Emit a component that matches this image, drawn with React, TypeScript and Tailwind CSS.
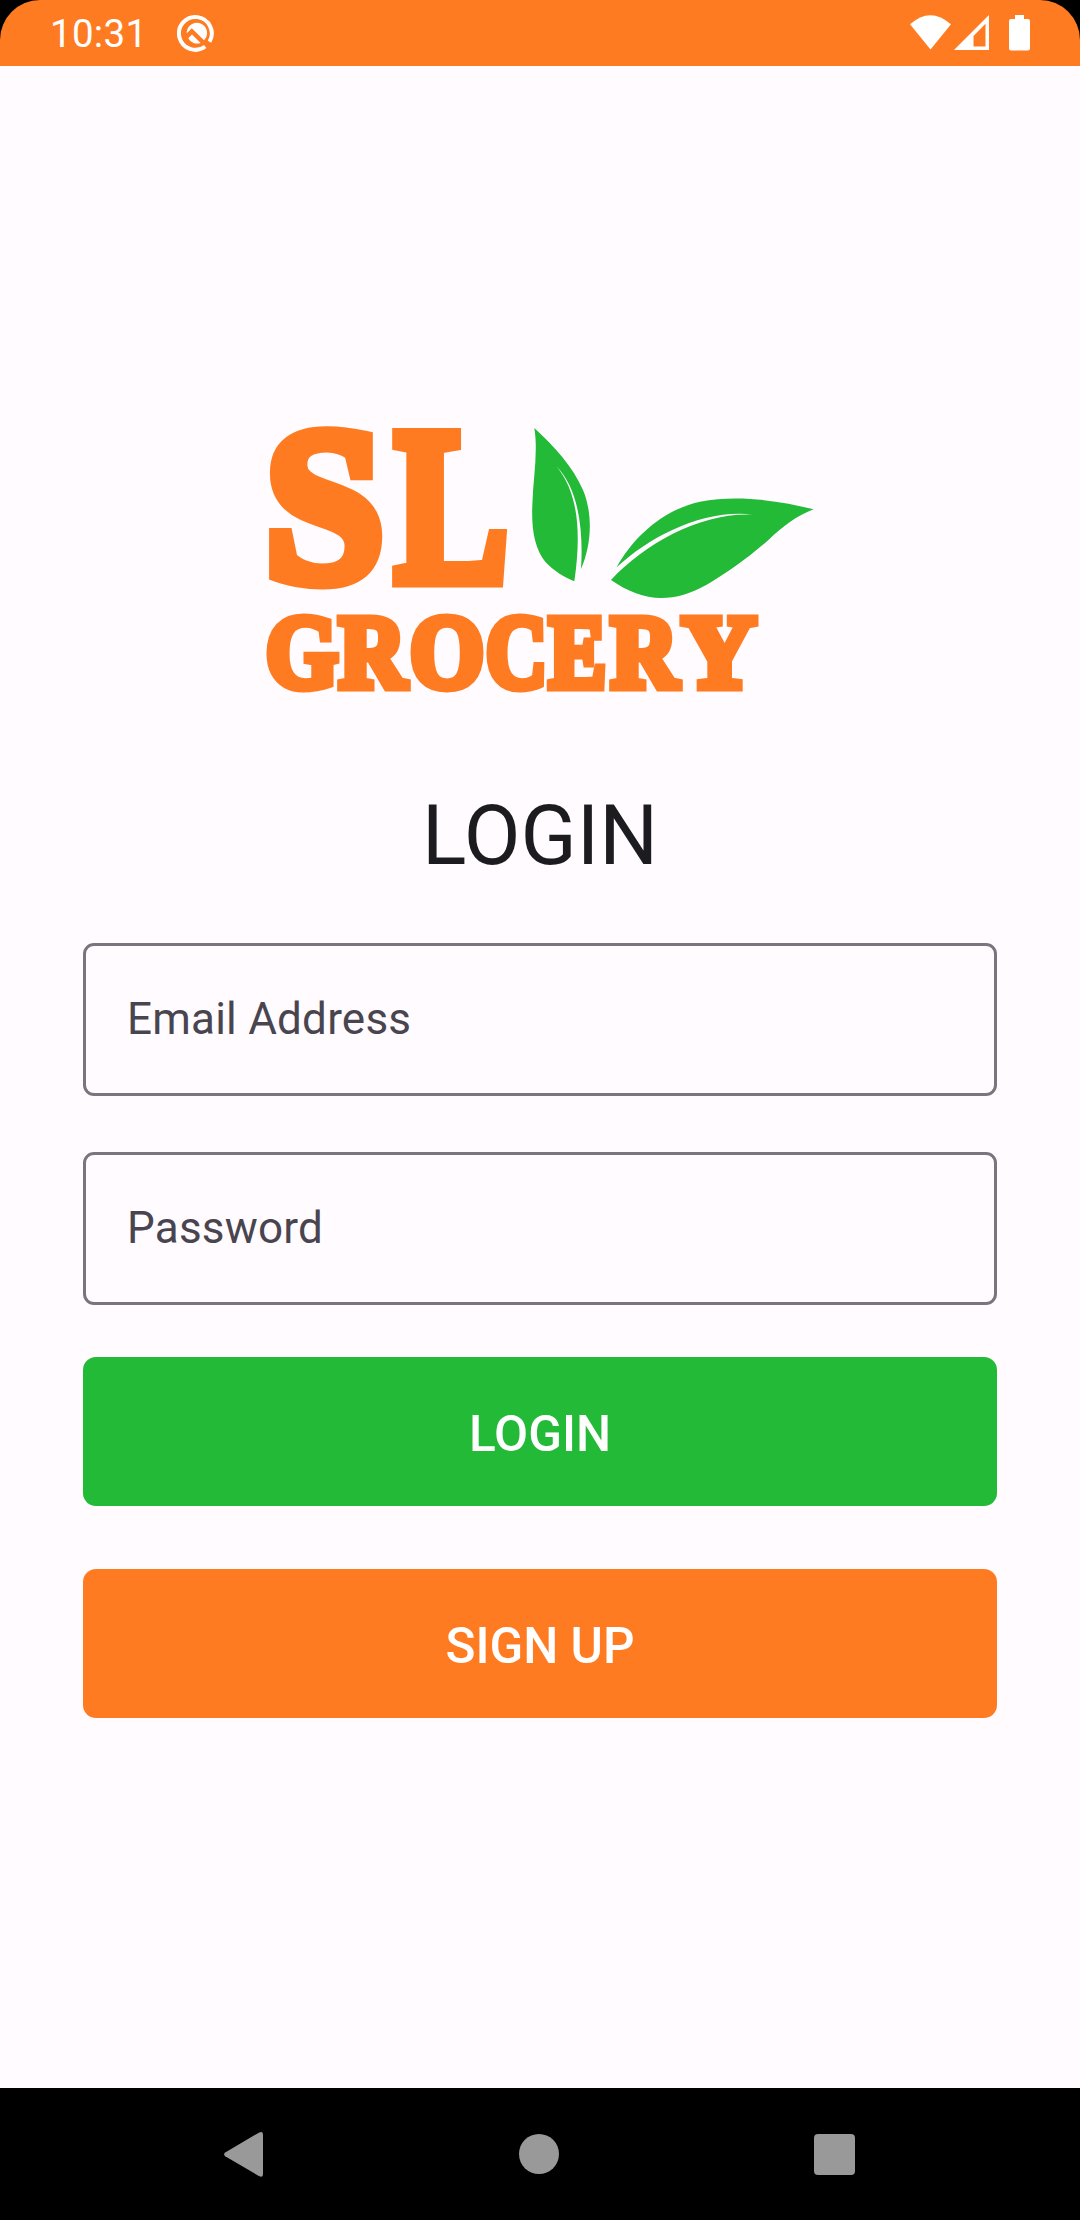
import React from "react";

type Glyph = { char: string; x: number; width: number };

const wordTop: Glyph[] = [
  { char: "S", x: 265, width: 119 },
  { char: "L", x: 395, width: 113 },
];

const wordBottom: Glyph[] = [
  { char: "G", x: 266, width: 72 },
  { char: "R", x: 339, width: 67 },
  { char: "O", x: 410, width: 74 },
  { char: "C", x: 486, width: 61 },
  { char: "E", x: 549, width: 57 },
  { char: "R", x: 611, width: 67 },
  { char: "Y", x: 682, width: 74 },
];

function Word({ glyphs, y, size, stroke }: { glyphs: Glyph[]; y: number; size: number; stroke: number }) {
  return (
    <g fontSize={size} strokeWidth={stroke}>
      {glyphs.map((g) => (
        <text key={g.x} x={g.x} y={y} textLength={g.width} lengthAdjust="spacingAndGlyphs">
          {g.char}
        </text>
      ))}
    </g>
  );
}

function Logo() {
  return (
    <svg className="block h-[300px] w-[580px] overflow-visible" viewBox="250 410 580 300" role="img" aria-label="SL Grocery">
      <g fill="#ff7b22" stroke="#ff7b22" strokeLinejoin="miter" fontWeight="700" style={{ fontFamily: '"Liberation Serif", serif' }}>
        <Word glyphs={wordTop} y={580} size={220} stroke={15} />
        <Word glyphs={wordBottom} y={687} size={104} stroke={9} />
      </g>
      <g transform="translate(510 410) scale(.33333)" fill="#22ba36">
        <path d="M73 54C132 108 189 170 219 240C250 315 244 405 213 477C220 371 209 237 138 168C204 244 215 365 193 514C166 504 130 482 107 457C73 416 64 355 67 285C69 207 85 128 73 54Z" />
        <path d="M320 472C372 377 464 298 570 275C683 254 805 271 911 298C858 318 819 350 776 389C716 442 655 486 590 524C517 565 446 576 378 550C351 540 326 526 303 510C407 397 579 305 732 314C583 296 424 376 320 472Z" />
      </g>
    </svg>
  );
}

function StatusBar() {
  return (
    <div className="h-[66px] bg-black">
      <header className="flex h-full items-center rounded-t-[40px] bg-[#ff7b22] pl-[50px] text-white">
        <span className="w-[127px] pt-[2px] text-[38.5px] leading-none tracking-[0.3px]">10:31</span>
        <svg className="block h-[40px] w-[40px]" viewBox="0 0 40 40">
          <path d="M28.2 34A16.4 16.4 0 1 1 32.5 29.2" transform="translate(0 -.5)" fill="none" stroke="#fff" strokeWidth="4" />
          <path d="M9.8 18.5A10.2 10.2 0 1 1 27 27.3L14.8 15.2L9.8 20.2Z" fill="#fff" />
          <path d="M11.2 25.2L15 21.6L23.6 30A10.2 10.2 0 0 1 11.2 25.2Z" fill="#fff" />
        </svg>
        <svg className="ml-auto block h-[66px] w-[170px]" viewBox="910 0 170 66" fill="#fff">
          <path d="M910 24.3Q930.3 6 951 24.3L930.5 49.5Z" />
          <path fillRule="evenodd" d="M954 50L989 15V50ZM973.5 36V46.5H985.5V23.8Z" />
          <path d="M1015 15H1024V19H1028Q1030 19 1030 21V48.5Q1030 50.5 1028 50.5H1011Q1009 50.5 1009 48.5V21Q1009 19 1011 19H1015Z" />
        </svg>
      </header>
    </div>
  );
}

function Field({ label, type }: { label: string; type: string }) {
  return (
    <input
      type={type}
      placeholder={label}
      aria-label={label}
      className="block h-[153px] w-full rounded-[11px] border-[3px] border-[#79747e] bg-transparent px-[41px] pb-px text-[44px] tracking-[0.005em] text-[#49454f] placeholder:text-[#49454f] placeholder:opacity-100"
    />
  );
}

export default function App() {
  return (
    <div className="flex h-[2220px] w-[1080px] flex-col bg-[#fffbff] font-['Roboto',sans-serif]">
      <StatusBar />
      <main className="flex flex-1 flex-col px-[83px]">
        <div className="mt-[344px] ml-[167px]">
          <Logo />
        </div>
        <h1 className="mt-[77px] text-center text-[82.5px] leading-[97px] text-[#1c1b1f]">LOGIN</h1>
        <form className="mt-[59px] flex flex-col">
          <Field label="Email Address" type="email" />
          <div className="mt-[56px]">
            <Field label="Password" type="password" />
          </div>
          <button type="button" className="mt-[52px] h-[149px] rounded-[13px] bg-[#22ba36] pt-[5px] text-[49.5px] font-medium text-white">
            LOGIN
          </button>
          <button type="button" className="mt-[63px] h-[149px] rounded-[13px] bg-[#ff7b22] pt-[5px] text-[49.5px] font-medium text-white">
            SIGN UP
          </button>
        </form>
      </main>
      <nav className="flex h-[132px] items-center justify-between bg-black pr-[225px] pl-[224px]">
        <svg className="block h-[46px] w-[40px]" viewBox="224 2131 40 46" fill="#999">
          <path d="M225.2 2152.4L258.8 2132.7Q263 2130.5 263 2135V2173.8Q263 2178.3 258.8 2176L225.2 2156.2Q223 2154.3 225.2 2152.4Z" />
        </svg>
        <span className="h-10 w-10 rounded-full bg-[#999]" />
        <span className="mt-px h-[41px] w-[41px] rounded-[4px] bg-[#999]" />
      </nav>
    </div>
  );
}
